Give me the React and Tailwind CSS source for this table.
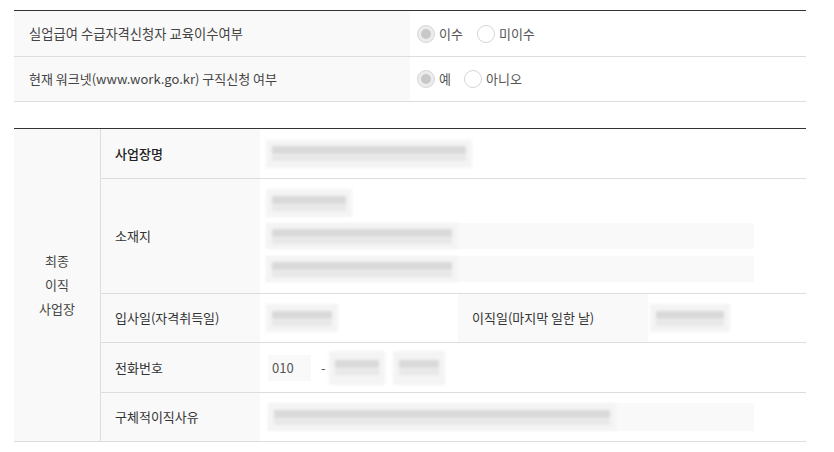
import React from "react";

function Radio({ checked, label }) {
  return (
    <label className="flex items-center">
      {checked ? (
        <span className="flex h-[18px] w-[18px] items-center justify-center rounded-full border border-[#d6d6d6] bg-[#ececec]">
          <span className="h-[10px] w-[10px] rounded-full bg-[#c8c8c8]" />
        </span>
      ) : (
        <span className="h-[18px] w-[18px] rounded-full border border-[#d6d6d6] bg-white" />
      )}
      <span className="ml-[4px] text-[13px] text-[#555]">{label}</span>
    </label>
  );
}

function Blur({ w, h = "h-[26px]" }) {
  return (
    <div className={`${w} ${h} flex flex-col justify-center px-[6px] bg-[#f4f4f4] blur-[1.5px]`}>
      <div className="h-[8px] w-full bg-[#d9d9d9]" />
      <div className="mt-[1px] h-[6px] w-full bg-[#e8e8e8]" />
    </div>
  );
}

export default function App() {
  return (
    <div
      className="w-[834px] h-[452px] bg-white px-[14px] pt-[10px] text-[#333]"
      style={{ fontFamily: '"Noto Sans CJK KR", "Noto Sans", sans-serif' }}
    >
      <div className="w-[792px] border-t border-[#333]">
        <div className="flex h-[46px] border-b border-[#ddd]">
          <div className="flex w-[396px] items-center bg-[#f9f9f9] pl-[15px] text-[13.3px] text-[#444]">
            실업급여 수급자격신청자 교육이수여부
          </div>
          <div className="flex items-center pl-[7px]">
            <Radio checked label="이수" />
            <div className="w-[14px]" />
            <Radio label="미이수" />
          </div>
        </div>
        <div className="flex h-[45px] border-b border-[#ddd]">
          <div className="flex w-[396px] items-center bg-[#f9f9f9] pl-[15px] text-[13px] text-[#444]">
            현재 워크넷(www.work.go.kr) 구직신청 여부
          </div>
          <div className="flex items-center pl-[7px]">
            <Radio checked label="예" />
            <div className="w-[13px]" />
            <Radio label="아니오" />
          </div>
        </div>
      </div>

      <div className="mt-[26px] flex w-[792px] border-t border-b border-t-[#333] border-b-[#ddd]">
        <div className="flex w-[87px] flex-col items-center justify-center border-r border-[#ddd] bg-[#f9f9f9] text-[13px] leading-[24px] text-[#444]">
          <span>최종</span>
          <span>이직</span>
          <span>사업장</span>
        </div>
        <div className="flex flex-1 flex-col">
          <div className="flex h-[50px] border-b border-[#ddd]">
            <div className="flex w-[159px] items-center bg-[#f9f9f9] pl-[14px] text-[13px] font-medium text-[#222]">사업장명</div>
            <div className="flex items-center pl-[6px]">
              <Blur w="w-[206px]" h="h-[28px]" />
            </div>
          </div>
          <div className="flex h-[115px] border-b border-[#ddd]">
            <div className="flex w-[159px] items-center bg-[#f9f9f9] pl-[14px] text-[13px] text-[#333]">소재지</div>
            <div className="flex flex-1 flex-col pl-[6px] pt-[10px]">
              <Blur w="w-[86px]" h="h-[28px]" />
              <div className="mt-[6px] flex h-[26px] w-[488px] bg-[#f9f9f9]">
                <Blur w="w-[192px]" />
              </div>
              <div className="mt-[7px] flex h-[26px] w-[488px] bg-[#f9f9f9]">
                <Blur w="w-[192px]" />
              </div>
            </div>
          </div>
          <div className="flex h-[49px] border-b border-[#ddd]">
            <div className="flex w-[159px] items-center bg-[#f9f9f9] pl-[14px] text-[13px] text-[#333]">입사일(자격취득일)</div>
            <div className="flex w-[198px] items-center pl-[6px]">
              <Blur w="w-[72px]" h="h-[28px]" />
            </div>
            <div className="flex w-[190px] items-center bg-[#f9f9f9] pl-[14px] text-[13px] text-[#333]">이직일(마지막 일한 날)</div>
            <div className="flex items-center pl-[2px]">
              <Blur w="w-[80px]" h="h-[28px]" />
            </div>
          </div>
          <div className="flex h-[50px] border-b border-[#ddd]">
            <div className="flex w-[159px] items-center bg-[#f9f9f9] pl-[14px] text-[13px] text-[#333]">전화번호</div>
            <div className="flex items-center pl-[8px]">
              <div className="flex h-[26px] w-[43px] items-center bg-[#f9f9f9] pl-[4px] text-[13px] text-[#555]">010</div>
              <span className="ml-[10px] text-[13px] text-[#555]">-</span>
              <div className="ml-[3px]"><Blur w="w-[56px]" h="h-[34px]" /></div>
              <div className="ml-[8px]"><Blur w="w-[52px]" h="h-[34px]" /></div>
            </div>
          </div>
          <div className="flex h-[48px]">
            <div className="flex w-[159px] items-center bg-[#f9f9f9] pl-[14px] text-[13px] text-[#333]">구체적이직사유</div>
            <div className="flex items-center pl-[8px]">
              <div className="flex h-[28px] w-[486px] bg-[#f9f9f9]">
                <Blur w="w-[348px]" h="h-[28px]" />
              </div>
            </div>
          </div>
        </div>
      </div>
    </div>
  );
}
